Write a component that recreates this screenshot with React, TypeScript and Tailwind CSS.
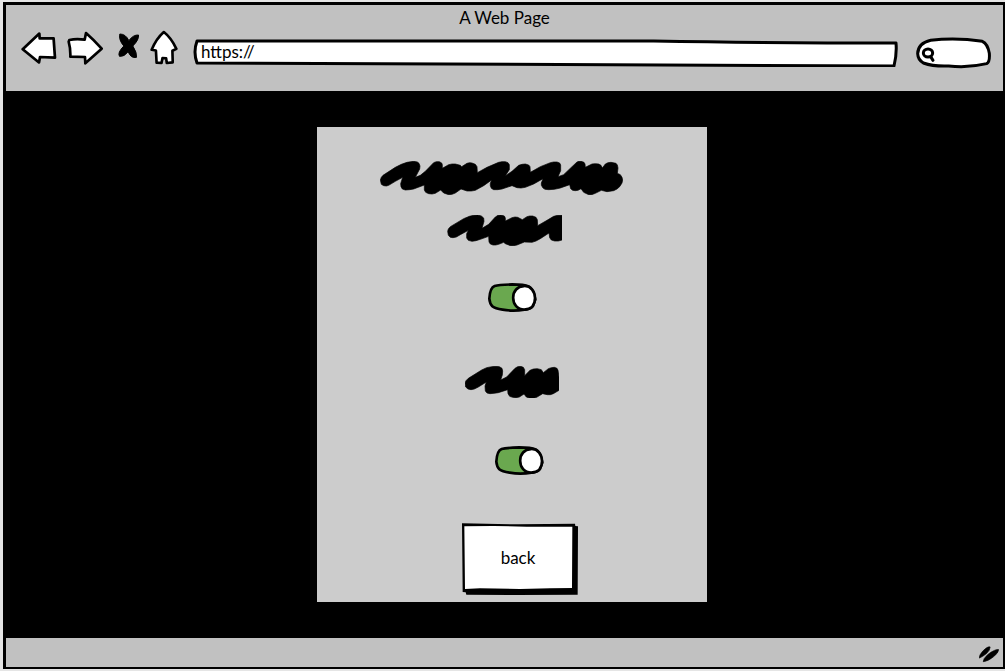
import React from "react";

function ToolButton({ label, className, viewBox, children }: {
  label: string;
  className: string;
  viewBox: string;
  children: React.ReactNode;
}) {
  return (
    <button type="button" aria-label={label} className={className}>
      <svg viewBox={viewBox} className="block h-full w-full" aria-hidden="true">
        {children}
      </svg>
    </button>
  );
}

function Scribble({ className, viewBox, d }: { className: string; viewBox: string; d: string }) {
  return (
    <svg viewBox={viewBox} className={className} aria-hidden="true">
      <path d={d} fill="#000" stroke="#000" strokeWidth="2" strokeLinejoin="round" />
    </svg>
  );
}

function Toggle({ label, className }: { label: string; className: string }) {
  return (
    <label className={className}>
      <input type="checkbox" role="switch" aria-label={label} defaultChecked className="peer absolute inset-0 m-0 cursor-pointer opacity-0" />
      <svg viewBox="143 39 148 87" className="block h-[29px] w-[49px] rounded-lg peer-focus-visible:outline-2" aria-hidden="true">
        <path
          d="M163 48Q176 44 216 43Q252 43 266 49Q278 56 282 72L286 88L279 108Q272 118 253 119Q220 125 187 119Q164 116 157 110Q148 101 147 86Q149 53 163 48Z"
          fill="#6aa84f"
          stroke="#000"
          strokeWidth="8"
        />
        <path
          d="M251 48C273 46 285 66 285 84C285 105 273 119 252 119C232 119 219 103 219 83C219 63 232 49 251 48Z"
          fill="#fff"
          stroke="#000"
          strokeWidth="8"
        />
      </svg>
    </label>
  );
}

export default function App() {
  return (
    <div className="flex min-h-screen flex-col bg-[#e5e5e5] pt-0.5 pb-0.5 pl-[3px] font-['Lato',sans-serif] text-[17px] leading-5 text-black">
      <div className="flex flex-1 flex-col border-[3px] border-r-2 border-b-2 border-black bg-black">
        <header className="h-[86px] bg-[#c1c1c1]">
          <h1 className="pt-[3px] text-center font-normal">A Web Page</h1>
          <div className="flex items-start pt-px pr-3 pl-[15px]">
            <ToolButton label="Back" className="mt-0.5 h-[33px] w-9" viewBox="64 92 106 96">
              <path d="M69 145L118 99L119 113L160 113L164 170L120 168L117 184Z" fill="#fff" stroke="#000" strokeWidth="8" strokeLinejoin="round" />
            </ToolButton>
            <ToolButton label="Forward" className="mt-0.5 ml-2.5 h-[34px] w-9" viewBox="202 92 108 102">
              <path d="M209 119Q230 114 255 118L259 98Q283 119 306 145L257 189L256 170L212 169Q213 146 207 124Z" fill="#fff" stroke="#000" strokeWidth="8" strokeLinejoin="round" />
            </ToolButton>
            <ToolButton label="Stop" className="mt-1 ml-[15px] h-[26px] w-[21px]" viewBox="356 99 62 78">
              <path d="M361 102Q379 102 388 122Q401 104 417 105Q419 119 400 138Q413 158 411 172Q394 176 386 155Q374 171 360 169Q353 158 373 138Q357 120 361 102Z" fill="#000" stroke="#000" strokeWidth="3" strokeLinejoin="round" />
            </ToolButton>
            <ToolButton label="Home" className="mt-px ml-[11px] h-[35px] w-7" viewBox="450 90 85 104">
              <path d="M492 95Q514 112 530 146L518 152L519 187L501 189L499 175L488 174L485 189L470 188L468 151L455 149Q469 115 492 95Z" fill="#fff" stroke="#000" strokeWidth="8" strokeLinejoin="round" />
            </ToolButton>
            <div className="relative mt-2.5 ml-[15px] h-7 flex-1">
              <svg viewBox="0 0 704 28" preserveAspectRatio="none" className="absolute inset-0 h-full w-full" aria-hidden="true">
                <path d="M4 2Q230 1 460 2Q570 4 702 4Q703 15 700 27Q350 27 4 24Q0 13 4 2Z" fill="#fff" stroke="#000" strokeWidth="3" strokeLinejoin="round" vectorEffect="non-scaling-stroke" />
              </svg>
              <input aria-label="Address" defaultValue="https://" className="relative h-7 w-full bg-transparent px-2 pb-1 outline-none" />
            </div>
            <div className="relative mt-2 ml-[18px] h-8 w-[75px]">
              <svg viewBox="167 111 225 96" className="absolute inset-0 h-full w-full" aria-hidden="true">
                <path d="M211 121Q285 111 366 124Q382 131 387 160Q389 186 379 191Q326 204 265 198Q220 200 189 189Q173 180 172 161Q173 130 211 121Z" fill="#fff" stroke="#000" strokeWidth="9" />
                <ellipse cx="203" cy="159" rx="14" ry="12" fill="none" stroke="#000" strokeWidth="9" />
                <path d="M211 170L218 181" stroke="#000" strokeWidth="9" strokeLinecap="round" />
              </svg>
              <input type="search" aria-label="Search" className="relative h-8 w-full bg-transparent pr-2 pl-5 outline-none" />
            </div>
          </div>
        </header>

        <main className="flex flex-1 items-start justify-center bg-black py-9 pl-[15px]">
          <section className="flex w-[390px] flex-col items-start bg-[#cccccc] pt-[34px] pb-1.5">
            <Scribble
              className="ml-[63px] h-[34px] w-[243px]"
              viewBox="29 31 729 102"
              d="M30 88L33 80L38 74L75 50L93 41L110 35L130 32L141 34L146 38L149 46L148 55L135 80L150 74L165 62L190 36L198 33L207 33L214 37L216 42V53L235 42L245 40L255 40L270 44L274 48L290 38L298 36L305 37L315 41L320 48L321 66L350 50L385 35L395 33L405 33L413 36L417 42V57L405 75L425 62L445 44L455 41L465 40L475 43L479 48L480 65L510 48L540 36L550 34L560 34L568 37L571 43V60L563 78L580 72L605 48L620 34L626 32L632 32L641 35L644 40L645 50L665 40L675 39L685 40L692 44L696 52L705 40L713 36L722 35L737 38L741 43L743 52L741 68L750 72L755 80L757 88L755 97L748 108L740 115L730 120L710 123L693 119L675 128L664 132L655 132L640 125L632 114L623 119L615 120L607 119L601 114L598 102L570 112L552 116L535 117L524 116L518 112L513 104V97L518 84L490 100L465 110L452 112L440 111L425 105L395 115L382 117L370 117L363 113L360 105V98L364 88L340 105L315 119L303 121L290 121L272 115L255 127L245 131L235 132L220 127L211 118L195 128L185 130L175 129L166 125L162 118V103L130 115L118 117L105 118L96 115L92 108L91 99L97 80L75 92L55 104L48 106L40 105L33 101Z"
            />
            <Scribble
              className="mt-5 ml-[130px] h-[31px] w-[115px]"
              viewBox="230 194 345 93"
              d="M232 243L234 236L240 229L280 205L297 198L310 195L322 194L333 197L340 203L341 213L335 234L355 222L375 200L383 195L392 194L402 197L405 203V212L425 202L434 200L442 201L456 208L470 199L478 197L487 197L497 201L501 208L502 226L530 210L550 198L562 195L575 195V269L564 272L553 272L543 269L538 262L536 248L510 265L497 272L485 276L462 275L440 284L430 286L420 286L405 280L400 276L385 282L376 284L368 284L360 281L356 275L355 258L330 267L317 271L305 273L294 270L289 263V250L294 240L270 253L258 260L248 262L240 261L234 255Z"
            />
            <Toggle label="First option" className="relative mt-[37px] ml-[171px] block" />
            <Scribble
              className="mt-[54px] ml-[148px] h-8 w-[94px]"
              viewBox="75 287 282 96"
              d="M75 338L78 331L85 324L125 299L140 292L155 289L167 288L178 289L186 294L188 302L187 314L182 329L200 320L225 294L233 289L242 288L250 291L254 298V316L270 300L280 296L292 295L304 298L310 307L325 295L334 292L343 291L351 294L354 300L357 320V360L340 370L331 373L322 373L308 370L290 381L280 384L270 384L259 380L252 371L238 380L228 382L218 381L209 378L204 370L203 358L175 367L162 369L150 370L141 368L136 362L135 347L139 335L115 350L103 356L93 358L84 356L77 350Z"
            />
            <Toggle label="Second option" className="relative mt-12 ml-[178px] block" />
            <button type="button" className="relative mt-12 ml-[144px] h-[73px] w-[118px]">
              <svg viewBox="63 279 354 219" className="absolute inset-0 h-full w-full" aria-hidden="true">
                <path d="M66 280L235 283L405 281L406 288L414 289L413 494L230 495L79 494L77 487L68 486L67 380Z" />
                <path d="M73 289L160 288L260 290L397 290L396 474L330 475L240 477L120 475L75 477Z" fill="#fff" />
              </svg>
              <span className="relative block pr-1 pb-1">back</span>
            </button>
          </section>
        </main>

        <footer className="flex h-[29px] shrink-0 items-center justify-end bg-[#c1c1c1] pr-1">
          <svg viewBox="239 142 61 52" className="mt-1 h-[17px] w-5" aria-hidden="true">
            <path d="M240 179Q239 170 250 158Q266 142 273 145Q273 155 262 165Q248 176 240 179ZM252 190Q251 181 267 167Q289 151 299 153Q299 163 282 176Q266 189 252 190Z" stroke="#000" strokeWidth="2" />
          </svg>
        </footer>
      </div>
    </div>
  );
}
